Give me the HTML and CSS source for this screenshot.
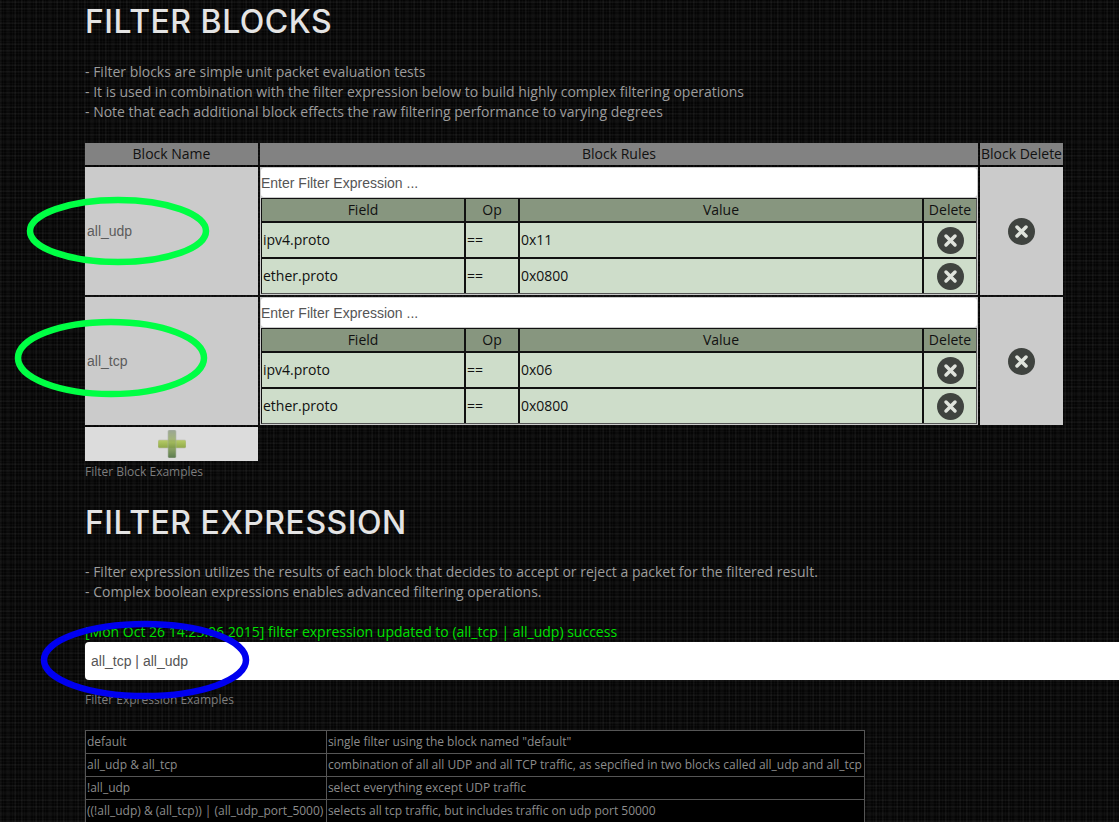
FILE: index.html
```html
<!DOCTYPE html>
<html lang="en">
<head>
<meta charset="utf-8">
<title>Filter Blocks</title>
<link rel="stylesheet" href="styles.css">
</head>
<body>
<main class="page">
  <h1 class="title first">FILTER BLOCKS</h1>
  <div class="notes">
    <div>- Filter blocks are simple unit packet evaluation tests</div>
    <div>- It is used in combination with the filter expression below to build highly complex filtering operations</div>
    <div>- Note that each additional block effects the raw filtering performance to varying degrees</div>
  </div>
  <div class="blocks">
    <div class="bhead">Block Name</div>
    <div class="bhead">Block Rules</div>
    <div class="bhead">Block Delete</div>

    <div class="bname">all_udp</div>
    <div class="brules">
      <div class="expr">Enter Filter Expression ...</div>
      <div class="rules">
        <div class="rhead">Field</div><div class="rhead">Op</div><div class="rhead">Value</div><div class="rhead">Delete</div>
        <div class="rcell">ipv4.proto</div><div class="rcell">==</div><div class="rcell">0x11</div>
        <div class="rcell rdel"><svg class="x" viewBox="0 0 27 27"><circle cx="13.5" cy="13.5" r="13.5" fill="#3f433f"/><path d="M9 9l9 9M18 9l-9 9" stroke="#dfe3dc" stroke-width="3.500" stroke-linecap="round"/></svg></div>
        <div class="rcell">ether.proto</div><div class="rcell">==</div><div class="rcell">0x0800</div>
        <div class="rcell rdel"><svg class="x" viewBox="0 0 27 27"><circle cx="13.5" cy="13.5" r="13.5" fill="#3f433f"/><path d="M9 9l9 9M18 9l-9 9" stroke="#dfe3dc" stroke-width="3.500" stroke-linecap="round"/></svg></div>
      </div>
    </div>
    <div class="bdel"><svg class="x" viewBox="0 0 27 27"><circle cx="13.5" cy="13.5" r="13.5" fill="#3f433f"/><path d="M9 9l9 9M18 9l-9 9" stroke="#dfe3dc" stroke-width="3.500" stroke-linecap="round"/></svg></div>

    <div class="bname">all_tcp</div>
    <div class="brules">
      <div class="expr">Enter Filter Expression ...</div>
      <div class="rules">
        <div class="rhead">Field</div><div class="rhead">Op</div><div class="rhead">Value</div><div class="rhead">Delete</div>
        <div class="rcell">ipv4.proto</div><div class="rcell">==</div><div class="rcell">0x06</div>
        <div class="rcell rdel"><svg class="x" viewBox="0 0 27 27"><circle cx="13.5" cy="13.5" r="13.5" fill="#3f433f"/><path d="M9 9l9 9M18 9l-9 9" stroke="#dfe3dc" stroke-width="3.500" stroke-linecap="round"/></svg></div>
        <div class="rcell">ether.proto</div><div class="rcell">==</div><div class="rcell">0x0800</div>
        <div class="rcell rdel"><svg class="x" viewBox="0 0 27 27"><circle cx="13.5" cy="13.5" r="13.5" fill="#3f433f"/><path d="M9 9l9 9M18 9l-9 9" stroke="#dfe3dc" stroke-width="3.500" stroke-linecap="round"/></svg></div>
      </div>
    </div>
    <div class="bdel"><svg class="x" viewBox="0 0 27 27"><circle cx="13.5" cy="13.5" r="13.5" fill="#3f433f"/><path d="M9 9l9 9M18 9l-9 9" stroke="#dfe3dc" stroke-width="3.500" stroke-linecap="round"/></svg></div>

    <div class="badd">
      <svg class="plus" viewBox="0 0 28 28">
        <defs>
          <linearGradient id="pv" x1="0" y1="0" x2="0" y2="1"><stop offset="0" stop-color="#8d9a86"/><stop offset="0.45" stop-color="#9cb45a"/><stop offset="1" stop-color="#3f6530"/></linearGradient>
          <linearGradient id="ph" x1="0" y1="0" x2="0" y2="1"><stop offset="0" stop-color="#b7cc68"/><stop offset="1" stop-color="#8fa948"/></linearGradient>
        </defs>
        <rect x="0" y="10" width="28" height="8" rx="1.500" fill="url(#ph)" stroke="#bdbdb0" stroke-width=".6"/>
        <rect x="10" y="0" width="8" height="28" rx="1.500" fill="url(#pv)" opacity=".82" stroke="#a9b0a4" stroke-width=".6"/>
      </svg>
    </div>
  </div>
  <div class="caption">Filter Block Examples</div>

  <h1 class="title second">FILTER EXPRESSION</h1>
  <div class="notes tight">
    <div>- Filter expression utilizes the results of each block that decides to accept or reject a packet for the filtered result.</div>
    <div>- Complex boolean expressions enables advanced filtering operations.</div>
  </div>
  <div class="status">[Mon Oct 26 14:23:06 2015] filter expression updated to (all_tcp | all_udp) success</div>
  <div class="exprbox">all_tcp | all_udp</div>
  <div class="caption under">Filter Expression Examples</div>
  <table class="examples">
    <tr><td class="key">default</td><td>single filter using the block named "default"</td></tr>
    <tr><td class="key">all_udp &amp; all_tcp</td><td>combination of all all UDP and all TCP traffic, as sepcified in two blocks called all_udp and all_tcp</td></tr>
    <tr><td class="key">!all_udp</td><td>select everything except UDP traffic</td></tr>
    <tr><td class="key">((!all_udp) &amp; (all_tcp)) | (all_udp_port_5000)</td><td>selects all tcp traffic, but includes traffic on udp port 50000</td></tr>
  </table>
</main>
<svg class="marks" width="1119" height="822" viewBox="0 0 1119 822">
  <ellipse cx="118" cy="231" rx="88" ry="31" fill="none" stroke="#00ff44" stroke-width="6.500"/>
  <ellipse cx="111" cy="358" rx="93" ry="36" fill="none" stroke="#00ff44" stroke-width="6.500"/>
  <ellipse cx="145" cy="660" rx="101" ry="36" fill="none" stroke="#0000f0" stroke-width="6.500"/>
</svg>
</body>
</html>
```
FILE: styles.css
```css
html, body { margin: 0; padding: 0; height: 822px; overflow: hidden; }
body {
  position: relative;
  background-color: #050505;
  background-image:
    repeating-linear-gradient(90deg, rgba(255,255,255,.028) 0 2px, transparent 2px 7px),
    repeating-linear-gradient(0deg, rgba(255,255,255,.028) 0 2px, transparent 2px 7px),
    linear-gradient(90deg, rgba(255,255,255,.018) 1px, transparent 1px),
    linear-gradient(0deg, rgba(255,255,255,.018) 1px, transparent 1px);
  background-size: auto, auto, 3px 3px, 3px 3px;
  font-family: "Open Sans", sans-serif;
  font-size: 14px;
  line-height: 20px;
  color: #9c9c9c;
}
.page { padding-left: 85px; width: 1034px; box-sizing: border-box; }
.title {
  margin: 0;
  font-family: "Inter", "Noto Sans", sans-serif;
  font-weight: 500;
  font-size: 32px;
  line-height: 40px;
  letter-spacing: 0.5px;
  color: #e4e4e4;
}
.title.first { padding-top: 2px; margin-bottom: 20px; }
.title.second { margin-top: 22px; margin-bottom: 19px; }
.notes { margin-bottom: 21px; }
.notes.tight { margin-bottom: 20px; }
.blocks {
  display: grid;
  grid-template-columns: 173px 718px 83px;
  grid-template-rows: 22px 128px 128px 34px;
  gap: 2px;
  width: 978px;
}
.bhead {
  background: #828282;
  color: #111;
  text-align: center;
  line-height: 22px;
  white-space: nowrap;
}
.bname {
  background: #cbcbcb;
  color: #5c5c5c;
  font-family: "Liberation Sans", sans-serif;
  display: flex;
  align-items: center;
  padding-left: 2px;
}
.brules {
  display: flex;
  flex-direction: column;
  gap: 1px;
  background: #cbcbcb;
  padding: 0 1px 1px 1px;
  box-sizing: border-box;
}
.bdel { background: #cbcbcb; display: flex; align-items: center; justify-content: center; }
.expr {
  background: #fff;
  color: #555;
  font-family: "Liberation Sans", sans-serif;
  height: 29px;
  line-height: 30px;
  border-radius: 3px;
  margin-top: 1px;
}
.rules {
  display: grid;
  grid-template-columns: 202px 52px 402px 52px;
  grid-template-rows: 22px 34px 34px;
  gap: 2px;
  background: #111;
  border: 1px solid #111;
  border-right: 1px solid #555;
  border-bottom: 1px solid #555;
}
.rhead { background: #87967f; color: #111; text-align: center; line-height: 22px; }
.rcell {
  background: #ceddca;
  color: #111;
  display: flex;
  align-items: center;
  padding-left: 1px;
}
.rcell.rdel { justify-content: center; padding-left: 0; }
.x { width: 27px; height: 27px; display: block; }
.badd {
  grid-column: 1;
  background: #dcdcdc;
  display: flex;
  align-items: center;
  justify-content: center;
}
.plus { width: 28px; height: 28px; display: block; }
.caption { font-size: 12px; line-height: 18px; color: #7d7d7d; margin-top: 2px; }
.status { color: #00e000; }
.exprbox {
  background: #fff;
  color: #555;
  font-family: "Liberation Sans", sans-serif;
  height: 38px;
  line-height: 38px;
  border-radius: 4px 0 0 4px;
  padding-left: 6px;
  width: 1028px;
}
.caption.under { margin-top: 11px; margin-bottom: 21px; }
.examples {
  border-collapse: collapse;
  background: #000;
  font-size: 12px;
  line-height: 18px;
  color: #8c8c8c;
  width: 780px;
}
.examples td {
  border: 1px solid #555;
  padding: 2px 1px;
  height: 18px;
  white-space: nowrap;
}
.examples td.key { padding-right: 2px; }
.marks { position: absolute; left: 0; top: 0; pointer-events: none; }
```
